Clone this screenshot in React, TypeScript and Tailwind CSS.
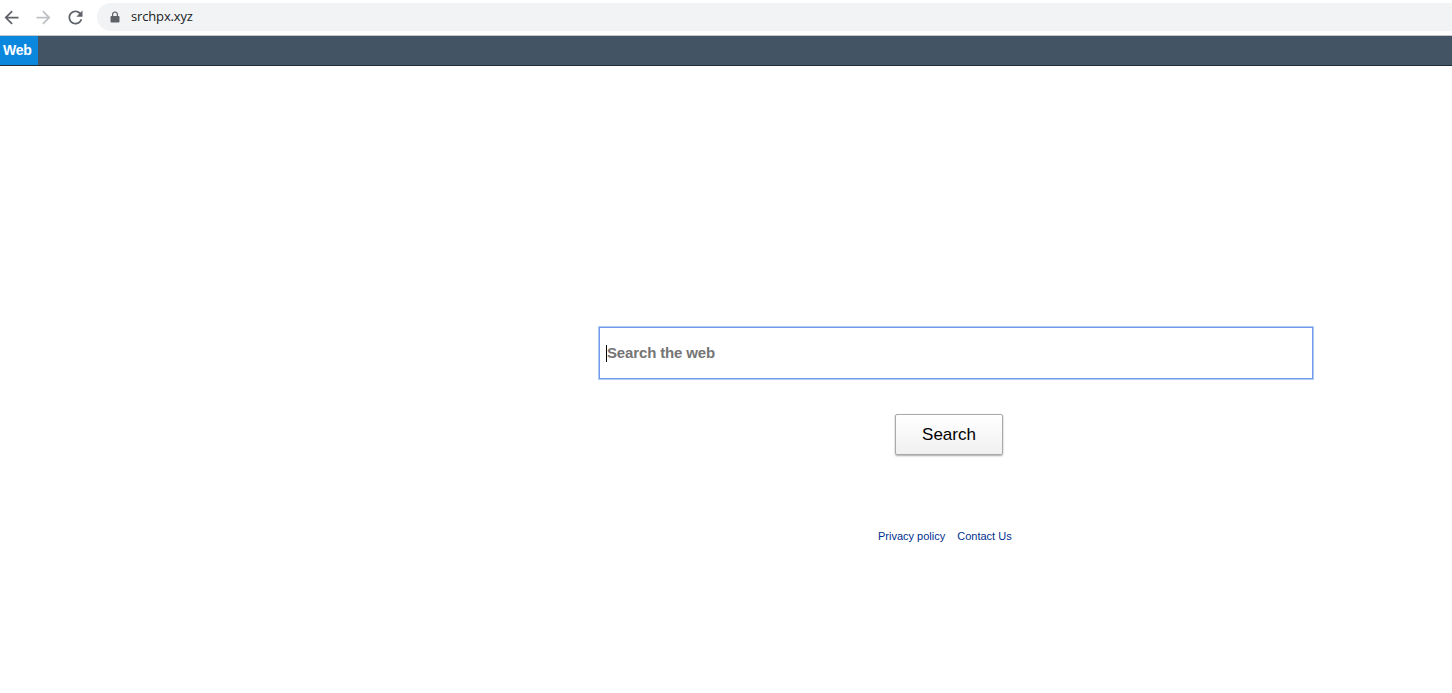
function Lock() {
  return (
    <svg width="10" height="12" viewBox="0 0 10 12" className="fill-[#5f6368]">
      <path d="M2 5V3.4C2 1.7 3.3.6 5 .6s3 1.1 3 2.8V5h.6c.5 0 .9.4.9.9v4.7c0 .5-.4.9-.9.9H1.400c-.5 0-.9-.4-.9-.9V5.900c0-.5.4-.9.9-.9H2zm1.200 0h3.600V3.400C6.800 2.400 6 1.800 5 1.800s-1.800.6-1.800 1.600V5z" />
    </svg>
  );
}

function Arrow({ className }: { className: string }) {
  return (
    <svg width="21" height="21" viewBox="0 0 24 24" className={className}>
      <path d="M20 11H7.830l5.590-5.590L12 4l-8 8 8 8 1.410-1.410L7.830 13H20v-2z" />
    </svg>
  );
}

function Reload() {
  return (
    <svg width="21" height="21" viewBox="0 0 24 24" className="fill-[#5f6368]">
      <path d="M17.650 6.350C16.200 4.900 14.210 4 12 4c-4.420 0-7.990 3.580-7.990 8s3.570 8 7.990 8c3.730 0 6.840-2.550 7.730-6h-2.080c-.820 2.330-3.040 4-5.650 4-3.310 0-6-2.690-6-6s2.690-6 6-6c1.660 0 3.140.690 4.220 1.780L13 11h7V4l-2.350 2.350z" />
    </svg>
  );
}

export default function App() {
  return (
    <div className="h-[693px] overflow-hidden bg-white font-['Liberation_Sans',Arial,sans-serif]">
      {/* browser toolbar */}
      <div className="flex h-[36px] items-start border-b border-[#c4c8cc] bg-white">
        <div className="flex h-[34px] w-[97px] shrink-0 items-center gap-[11px] pl-[0.5px]">
          <Arrow className="fill-[#5f6368]" />
          <Arrow className="rotate-180 fill-[#bdc1c6]" />
          <Reload />
        </div>
        <div className="mt-[3px] flex h-[28px] flex-1 items-center rounded-l-full bg-[#f1f3f4] pl-[13px]">
          <Lock />
          <span className="ml-[11px] font-['Open_Sans',sans-serif] text-[13px] tracking-[-0.15px] text-[#202124]">srchpx.xyz</span>
        </div>
      </div>

      {/* nav */}
      <nav className="flex h-[30px] border-b border-[#1f2d37] bg-[#435565]">
        <a className="flex h-[29px] w-[38px] items-center bg-[#0b87de] pl-[3px] text-[14px] font-bold tracking-[-0.3px] text-white">Web</a>
      </nav>

      {/* search */}
      <main className="pl-[599px] pt-[261px]">
        <div className="relative flex h-[52px] w-[714px] items-center border border-[#7099ea] pl-[7px] shadow-[0_0_0_1px_#b4cbf6]">
          <span className="absolute left-[6px] top-[17px] h-[17px] w-px bg-black" />
          <span className="text-[15px] font-bold tracking-[-0.14px] text-[#757575]">Search the web</span>
        </div>
        <button className="ml-[296px] mt-[35px] block h-[41px] w-[108px] rounded-[2px] border border-[#a9a9a9] bg-gradient-to-b from-white to-[#f0f0f0] text-[17px] text-black shadow-[0_1px_2px_rgba(0,0,0,0.35)]">
          Search
        </button>
        <div className="ml-[279px] mt-[74px] flex gap-[12px] text-[11px] leading-[14px] text-[#00308f]">
          <a>Privacy policy</a>
          <a>Contact Us</a>
        </div>
      </main>
    </div>
  );
}
